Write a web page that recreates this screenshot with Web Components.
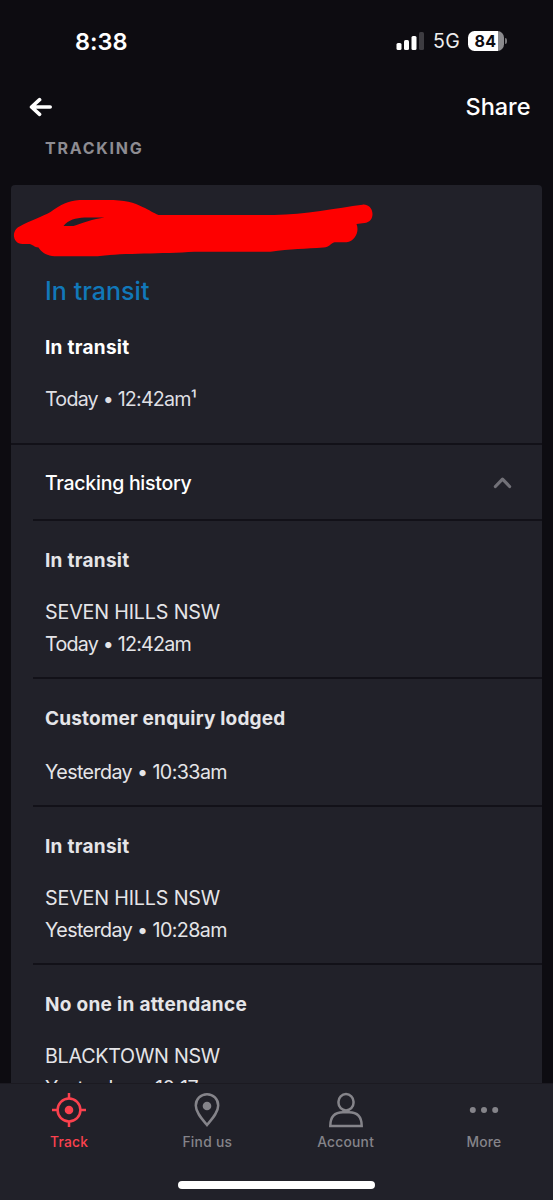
<!DOCTYPE html>
<html lang="en">
<head>
<meta charset="utf-8">
<title>Tracking</title>
<style>
html,body{margin:0;height:100%;background:#0d0c11}
body{font-family:Inter,"Liberation Sans",sans-serif;color:#fff;overflow:hidden}
</style>
</head>
<body>
<tracking-app></tracking-app>
<script>
const define = (name, html, setup) => customElements.define(name, class extends HTMLElement {
  constructor() {
    super();
    this.attachShadow({mode: 'open'}).innerHTML = html;
  }
  connectedCallback() { if (setup) setup(this); }
});

/* One line of text tracked out or in to a given advance width. */
define('fit-text', `<style>:host{display:block;white-space:nowrap;width:max-content}span{display:inline-block}</style><span><slot></slot></span>`, el => {
  const span = el.shadowRoot.querySelector('span');
  const target = parseFloat(el.getAttribute('width'));
  const n = el.textContent.length;
  const natural = span.getBoundingClientRect().width;
  span.style.letterSpacing = ((target - natural) / n) + 'px';
});

define('status-bar', `<style>
:host{display:flex;align-items:center;height:82px;padding:0 46px 0 75px;box-sizing:border-box}
.time{font-size:23.5px;font-weight:600;flex:1}
.net{font-size:19.5px;margin-left:9px;color:#eee}
.bars{display:block}
.bat{display:flex;align-items:center;margin-left:8px}
.cell{width:36px;height:20px;border-radius:6.5px;background:linear-gradient(90deg,#fff 30px,#8b8b8e 30px);color:#0d0c11;display:flex;align-items:center;font-size:16px;font-weight:700}
.cell fit-text{margin-left:6.5px}
.cap{width:2px;height:6px;border-radius:0 3px 3px 0;background:#77777a;margin-left:1px}
</style>
<div class="time"><fit-text width="52.5">8:38</fit-text></div>
<svg class="bars" width="28" height="20" viewBox="0 0 28 20"><g fill="#fff"><rect x="0.5" y="12" width="5" height="7" rx="1.5"/><rect x="8" y="9" width="5" height="10" rx="1.5"/><rect x="15.5" y="5" width="5" height="14" rx="1.5"/></g><rect x="23" y="1" width="5" height="18" rx="1.5" fill="#3d3c41"/></svg>
<div class="net"><fit-text width="27">5G</fit-text></div>
<div class="bat"><div class="cell"><fit-text width="22">84</fit-text></div><div class="cap"></div></div>`);

define('nav-bar', `<style>
:host{display:flex;align-items:center;justify-content:space-between;height:49px;padding:0 22.5px 0 29px;font-size:23.5px;font-weight:550}
svg{display:block}
</style>
<svg width="24" height="20" viewBox="0 0 24 20" fill="none" stroke="#fff" stroke-width="3.6" stroke-linecap="round" stroke-linejoin="round"><path d="M10.6 2.7 2.5 10 10.6 17.3M2.7 10H21.2"/></svg>
<fit-text width="65">Share</fit-text>`);

define('section-label', `<style>:host{display:block;padding-left:45px;height:54px;line-height:34px;font-size:16px;font-weight:700;color:#8d8c92}</style><slot></slot>`);

define('red-scribble', `<style>:host{display:block;height:70px}svg{display:block;overflow:visible}</style>
<svg width="380" height="70" viewBox="11.5 185 380 70"><path fill="#fe0000" fill-rule="evenodd" d="M20 226.5C31 220.5 43 216.5 51 212C62 204 68 201 80 200H108C125 200 135 202.5 143 207C150 210 154 213 159 215H275C305 214.5 338 208 363 204.7C368 204 373 208 373 214C373 219 370 222.5 365 223L357 224C360 231 356 241 347 242.2H335C331 243 330 247.4 324 247.5C306 249 291 248.5 271 251.8H195C162 254 123 253 98 256.2H55C47 256 42 252 39 247.5C35 247.5 33 244.3 30 244H23C16 244 13 237 15 232C16 229 18 227.5 20 226.5ZM64 226C69 220 76 218 85 217.6H105C94 219 82 223.5 74 226Z"/></svg>`);

define('current-status', `<style>
:host{display:block;box-sizing:border-box;height:260px;border-bottom:2px solid #121118;padding-left:34px}
red-scribble{margin-left:-34px}
.state{font-size:25px;font-weight:500;color:#1178b9;line-height:32px;margin-top:20px}
.label{font-size:19px;font-weight:700;line-height:32px;margin-top:25px}
.when{font-size:19.7px;line-height:32px;margin-top:19px;color:#dfdfe3}
</style>
<red-scribble></red-scribble>
<fit-text class="state" width="104.5">In transit</fit-text>
<fit-text class="label" width="84.5">In transit</fit-text>
<fit-text class="when" width="151">Today • 12:42am¹</fit-text>`);

define('history-header', `<style>
:host{display:flex;align-items:center;justify-content:space-between;height:74px;padding:0 30px 0 34px;font-size:19.5px;font-weight:500;line-height:32px}
fit-text{position:relative;top:1px}
</style>
<fit-text width="146.5">Tracking history</fit-text>
<svg width="19" height="14" viewBox="0 0 19 14" fill="none" stroke="#727178" stroke-width="3.2" stroke-linecap="round" stroke-linejoin="round"><path d="M2.4 11.5 9.5 4.2 16.6 11.5"/></svg>`);

define('history-entry', `<style>
:host{display:block;margin-left:22px;border-top:2px solid #121118;padding:24px 0 17px 12px;color:#e5e5e8;font-size:19.7px;line-height:32px}
::slotted([slot=title]){font-size:19px;font-weight:700;margin-bottom:var(--gap,19px)}
</style>
<slot name="title"></slot><slot></slot>`);

define('tracking-card', `<style>
:host{display:block;box-sizing:border-box;margin:0 11px;border-radius:4px 4px 0 0;background:#212129;flex:1;min-height:0;overflow:hidden}
</style><slot></slot>`);

define('tab-item', `<style>
:host{display:flex;flex-direction:column;align-items:center;color:#85848a;font-size:13.8px;font-weight:500;line-height:20px}
:host([active]){color:#fb414e}
.icon{height:36px;margin-top:8px;margin-bottom:4px}
</style><div class="icon"><slot name="icon"></slot></div><slot></slot>`);

define('tab-bar', `<style>
:host{display:block;height:117px;box-sizing:border-box;border-top:1px solid #1b1a21;background:#212129;flex:none}
nav{display:grid;grid-template-columns:repeat(4,1fr);height:97px}
.home{width:197px;height:7.5px;border-radius:4px;background:#fff;margin:0 auto}
svg{display:block;fill:none;stroke:currentColor;stroke-width:2.5}
.dot{fill:currentColor;stroke:none}
</style>
<nav>
<tab-item active><svg slot="icon" width="36" height="36" viewBox="0 0 36 36"><circle cx="18" cy="18" r="11.4"/><path d="M18 1V7M18 29V35M1 18H7M29 18H35"/><circle class="dot" cx="18" cy="18" r="4.3"/></svg><fit-text width="38.5">Track</fit-text></tab-item>
<tab-item><svg slot="icon" width="36" height="36" viewBox="0 0 36 36"><path d="M18 33C13 27 6.8 20.5 6.8 13.5C6.8 7 11.8 2.2 18 2.2S29.2 7 29.2 13.5C29.2 20.5 23 27 18 33Z"/><circle class="dot" cx="18" cy="14" r="4.3"/></svg><fit-text width="50">Find us</fit-text></tab-item>
<tab-item><svg slot="icon" width="36" height="36" viewBox="0 0 36 36"><rect x="10.5" y="2.1" width="15" height="16.3" rx="7.5"/><path d="M2.3 34C2.3 24.5 7.5 20.3 15 20.3H21C28.5 20.3 33.7 24.5 33.7 34Z"/></svg><fit-text width="57">Account</fit-text></tab-item>
<tab-item><svg slot="icon" width="36" height="36" viewBox="0 0 36 36"><g class="dot"><circle cx="6.8" cy="18" r="3"/><circle cx="18" cy="18" r="3"/><circle cx="29.2" cy="18" r="3"/></g></svg><fit-text width="35">More</fit-text></tab-item>
</nav>
<div class="home"></div>`);

define('tracking-app', `<style>
:host{display:flex;flex-direction:column;height:1200px;width:553px}
</style>
<status-bar></status-bar>
<nav-bar></nav-bar>
<section-label><fit-text width="98.5">TRACKING</fit-text></section-label>
<tracking-card>
<current-status></current-status>
<history-header></history-header>
<history-entry><fit-text slot="title" width="84.5">In transit</fit-text><fit-text width="175">SEVEN HILLS NSW</fit-text><fit-text width="146">Today • 12:42am</fit-text></history-entry>
<history-entry style="--gap:21px"><fit-text slot="title" width="240.5">Customer enquiry lodged</fit-text><fit-text width="182">Yesterday • 10:33am</fit-text></history-entry>
<history-entry><fit-text slot="title" width="84.5">In transit</fit-text><fit-text width="175">SEVEN HILLS NSW</fit-text><fit-text width="182">Yesterday • 10:28am</fit-text></history-entry>
<history-entry><fit-text slot="title" width="202">No one in attendance</fit-text><fit-text width="175">BLACKTOWN NSW</fit-text><fit-text width="180">Yesterday • 10:17am</fit-text></history-entry>
</tracking-card>
<tab-bar></tab-bar>`);
</script>
</body>
</html>
